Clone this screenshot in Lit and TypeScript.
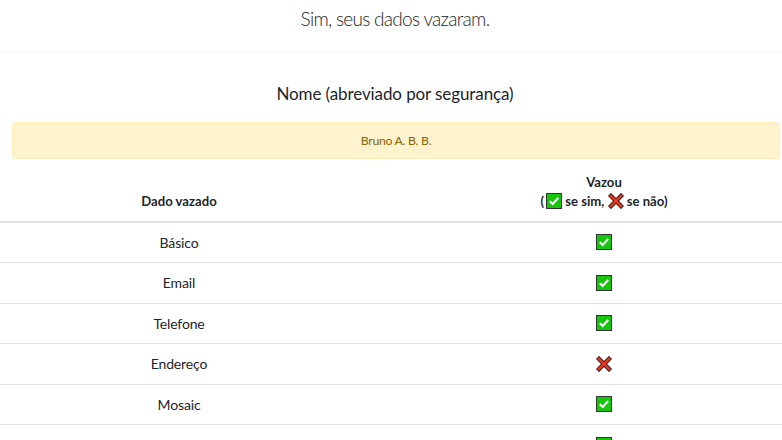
import { LitElement, html, css } from "lit";
import { customElement } from "lit/decorators.js";

const check = html`<svg class="ico" viewBox="0 0 16 16" aria-hidden="true">
  <rect x="0.5" y="0.5" width="15" height="15" fill="#16c60c" stroke="#333" stroke-width="1"/>
  <path d="M3.8 8.3 L6.7 11 L12.2 5" fill="none" stroke="#fff" stroke-width="2"/>
</svg>`;
const cross = html`<svg class="ico" viewBox="0 0 16 16" aria-hidden="true">
  <path d="M3 3 L13 13 M13 3 L3 13" fill="none" stroke="#3a1a1a" stroke-width="4.4" stroke-linecap="square"/>
  <path d="M3 3 L13 13 M13 3 L3 13" fill="none" stroke="#ec3a22" stroke-width="2.4" stroke-linecap="square"/>
</svg>`;

const rows: [string, boolean][] = [
  ["Básico", true],
  ["Email", true],
  ["Telefone", true],
  ["Endereço", false],
  ["Mosaic", true],
];

@customElement("app-root")
export class AppRoot extends LitElement {
  static styles = css`
    :host {
      display: block;
      width: 782px;
      height: 440px;
      overflow: hidden;
      background: #fff;
      color: #212529;
      font-family: Lato, sans-serif;
      font-size: 14px;
    }
    .lead {
      margin: 0;
      height: 53px;
      box-sizing: border-box;
      padding: 7px 0 0 8px;
      text-align: center;
      font-size: 19px;
      line-height: 24px;
      font-weight: 300;
      letter-spacing: -0.7px;
      border-bottom: 1px solid #f8f8f8;
    }
    h5 {
      margin: 0;
      padding: 29px 0 0 8px;
      text-align: center;
      font-size: 17px;
      line-height: 24px;
      font-weight: 400;
      letter-spacing: -0.1px;
    }
    .alert {
      margin: 16px 2px 0 12px;
      height: 37px;
      box-sizing: border-box;
      display: flex;
      align-items: center;
      justify-content: center;
      background: #fff3cd;
      border: 1px solid #ffeeba;
      border-radius: 4px;
      color: #856404;
      font-size: 12.25px;
      letter-spacing: -0.3px;
    }
    .row {
      display: grid;
      grid-template-columns: 358px 1fr;
      text-align: center;
      border-bottom: 1px solid #dee2e6;
      height: 40.5px;
      box-sizing: border-box;
      align-items: center;
      letter-spacing: -0.15px;
    }
    .row > :last-child {
      padding-left: 68px;
      display: flex;
      justify-content: center;
    }
    .head {
      height: 63.5px;
      border-bottom: 2px solid #dee2e6;
      font-weight: 700;
      font-size: 13.125px;
      line-height: 19px;
      align-items: end;
      padding-bottom: 10px;
      letter-spacing: 0;
    }
    .head > :last-child {
      display: block;
    }
    .paren {
      margin-right: 2px;
    }
    .ico {
      width: 16px;
      height: 16px;
      display: inline-block;
      vertical-align: -3px;
    }
    .last {
      height: 40.5px;
      box-sizing: border-box;
      padding: 12px 0 0 426px;
      display: flex;
      justify-content: center;
    }
  `;

  render() {
    return html`
      <p class="lead">Sim, seus dados vazaram.</p>
      <h5>Nome (abreviado por segurança)</h5>
      <div class="alert">Bruno A. B. B.</div>
      <div class="row head">
        <div>Dado vazado</div>
        <div>Vazou<br /><span class="paren">(</span>${check} se sim, ${cross} se não)</div>
      </div>
      ${rows.map(
        ([name, ok]) => html`<div class="row">
          <div>${name}</div>
          <div>${ok ? check : cross}</div>
        </div>`
      )}
      <div class="last">${check}</div>
    `;
  }
}
